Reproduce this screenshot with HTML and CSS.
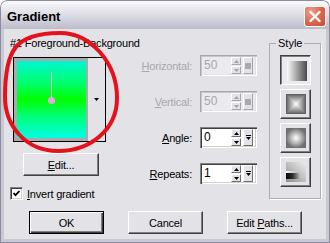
FILE: index.html
```html
<!DOCTYPE html>
<html>
<head>
<meta charset="utf-8">
<title>Gradient</title>
<link rel="stylesheet" href="styles.css">
</head>
<body>
<div class="window">
  <div class="titlebar">
    <span class="title">Gradient</span>
    <div class="close">
      <svg width="22" height="21" viewBox="0 0 22 21"><path d="M6.5 6 L15.5 15 M15.5 6 L6.5 15" stroke="#fff" stroke-width="2.4" stroke-linecap="round"/></svg>
    </div>
  </div>
  <div class="frame">
    <div class="client">
      <div class="main">
        <div class="left">
          <div class="preset">#1 Foreground-Background</div>
          <div class="preview">
            <div class="swatch">
              <div class="grad"><span class="needle"></span><span class="knob"></span></div>
            </div>
            <div class="drop"><svg width="5" height="3" viewBox="0 0 5 3"><polygon points="0,0 5,0 2.5,3" fill="#000"/></svg></div>
          </div>
          <button class="btn edit"><u>E</u>dit...</button>
          <div class="check">
            <span class="box"><svg width="9" height="9" viewBox="0 0 9 9"><polyline points="1.5,4 3.5,6.2 7.5,2" fill="none" stroke="#000" stroke-width="1.8"/></svg></span>
            <span class="check-label"><u>I</u>nvert gradient</span>
          </div>
        </div>

        <div class="fields">
          <span class="lbl off"><u>H</u>orizontal:</span>
          <div class="spin off">
            <span class="val">50</span>
            <span class="arrows"><span class="ab"><svg width="5" height="3" viewBox="0 0 5 3"><polygon points="0,3 5,3 2.5,0"/></svg></span><span class="ab"><svg width="5" height="3" viewBox="0 0 5 3"><polygon points="0,0 5,0 2.5,3"/></svg></span></span>
            <span class="xbtn"><span class="sq"></span></span>
          </div>

          <span class="lbl off"><u>V</u>ertical:</span>
          <div class="spin off">
            <span class="val">50</span>
            <span class="arrows"><span class="ab"><svg width="5" height="3" viewBox="0 0 5 3"><polygon points="0,3 5,3 2.5,0"/></svg></span><span class="ab"><svg width="5" height="3" viewBox="0 0 5 3"><polygon points="0,0 5,0 2.5,3"/></svg></span></span>
            <span class="xbtn"><span class="sq"></span></span>
          </div>

          <span class="lbl"><u>A</u>ngle:</span>
          <div class="spin">
            <span class="val">0</span>
            <span class="arrows"><span class="ab"><svg width="5" height="3" viewBox="0 0 5 3"><polygon points="0,3 5,3 2.5,0"/></svg></span><span class="ab"><svg width="5" height="3" viewBox="0 0 5 3"><polygon points="0,0 5,0 2.5,3"/></svg></span></span>
            <span class="xbtn"><svg width="5" height="6" viewBox="0 0 5 6"><rect x="0" y="0" width="5" height="1"/><polygon points="0,2 5,2 2.5,5"/></svg></span>
          </div>

          <span class="lbl"><u>R</u>epeats:</span>
          <div class="spin">
            <span class="val">1</span>
            <span class="arrows"><span class="ab"><svg width="5" height="3" viewBox="0 0 5 3"><polygon points="0,3 5,3 2.5,0"/></svg></span><span class="ab"><svg width="5" height="3" viewBox="0 0 5 3"><polygon points="0,0 5,0 2.5,3"/></svg></span></span>
            <span class="xbtn"><svg width="5" height="6" viewBox="0 0 5 6"><rect x="0" y="0" width="5" height="1"/><polygon points="0,2 5,2 2.5,5"/></svg></span>
          </div>
        </div>

        <div class="group">
          <div class="legend">Style</div>
          <div class="sbtn pressed"><span class="g g1"></span></div>
          <div class="sbtn"><span class="g g2"></span></div>
          <div class="sbtn"><span class="g g3"></span></div>
          <div class="sbtn"><span class="g g4"></span></div>
        </div>
      </div>

      <div class="buttons">
        <button class="btn default">OK</button>
        <button class="btn">Cancel</button>
        <button class="btn">Edit <u>P</u>aths...</button>
      </div>
    </div>
  </div>
  <svg class="ring" width="330" height="243" viewBox="0 0 330 243">
    <path d="M5 97 C5 50 15 33 60 33 C90 33 117 62 117 98 C117 130 90 151 58 151 C25 151 5 125 5 97 Z" fill="none" stroke="#e5121b" stroke-width="4"/>
  </svg>
</div>
</body>
</html>
```

FILE: styles.css
```css
html, body {
  margin: 0;
  padding: 0;
}

body {
  width: 330px;
  height: 243px;
  overflow: hidden;
  background: #ffffff;
  font-family: "Liberation Sans", Arial, sans-serif;
  font-size: 11px;
  letter-spacing: -0.2px;
  color: #000;
}

.window {
  position: relative;
  width: 330px;
  height: 243px;
  display: flex;
  flex-direction: column;
  border-radius: 7px 7px 0 0;
  overflow: hidden;
}

.titlebar {
  height: 29px;
  box-sizing: border-box;
  display: flex;
  align-items: center;
  padding: 2px 3px 0 6px;
  border: 1px solid #8c8c9c;
  border-bottom: none;
  border-radius: 7px 7px 0 0;
  background: linear-gradient(#fbfbfd 0%, #ececf1 22%, #dcdce4 50%, #c9c9d5 80%, #bcbccb 100%);
}

.title {
  font-weight: bold;
  font-size: 13px;
  letter-spacing: 0;
  color: #000;
}

.close {
  margin-left: auto;
  width: 22px;
  height: 21px;
  box-sizing: border-box;
  border: 1px solid #fff;
  border-radius: 3px;
  background: radial-gradient(ellipse at 30% 25%, #f0a08c 0%, #e06c55 45%, #c8472f 100%);
  display: flex;
  align-items: center;
  justify-content: center;
}

.close svg {
  display: block;
  margin: -1px;
}

.frame {
  flex: 1;
  display: flex;
  border: 1px solid #8c8c9c;
  border-top: none;
  padding: 0 3px 3px;
  background: #c9c9d4;
}

.client {
  flex: 1;
  background: #e3e2e7;
  display: flex;
  flex-direction: column;
}

.main {
  display: flex;
  height: 171px;
}

/* left column */
.left {
  width: 122px;
  box-sizing: border-box;
  padding-left: 6px;
  display: flex;
  flex-direction: column;
  align-items: flex-start;
}

.preset {
  margin-top: 8px;
  line-height: 13px;
  white-space: nowrap;
}

.preview {
  margin: 7px 0 0 3px;
  width: 93px;
  height: 85px;
  box-sizing: border-box;
  border: 1px solid #000;
  display: flex;
}

.swatch {
  width: 74px;
  height: 83px;
  box-sizing: border-box;
  border: 3px solid #a9a9ae;
  border-right-width: 2px;
}

.grad {
  position: relative;
  width: 100%;
  height: 100%;
  background: linear-gradient(#00f5d2 0%, #00ff70 28%, #00ff00 50%, #00ff78 72%, #00ffe4 100%);
}

.needle {
  position: absolute;
  left: 34px;
  top: 11px;
  width: 1px;
  height: 28px;
  background: #dcdcdc;
}

.knob {
  position: absolute;
  left: 31px;
  top: 36px;
  width: 7px;
  height: 7px;
  border-radius: 50%;
  background: #e6a6e6;
}

.drop {
  flex: 1;
  display: flex;
  align-items: center;
  justify-content: center;
}

.drop svg {
  display: block;
}

/* buttons */
.btn {
  width: 75px;
  height: 23px;
  padding: 0;
  margin: 0;
  box-sizing: border-box;
  font-family: "Liberation Sans", Arial, sans-serif;
  font-size: 11px;
  letter-spacing: -0.2px;
  color: #000;
  background: #e3e2e7;
  border: 1px solid;
  border-color: #ffffff #404040 #404040 #ffffff;
  box-shadow: inset -1px -1px #808080;
  border-radius: 0;
}

.btn.default {
  border: 1px solid #000;
  box-shadow: inset 1px 1px #ffffff, inset -1px -1px #404040, inset -2px -2px #808080;
}

.edit {
  margin: 11px 0 0 13px;
  width: 76px;
}

.check {
  margin-top: 11px;
  height: 13px;
  display: flex;
  align-items: center;
}

.box {
  width: 13px;
  height: 13px;
  box-sizing: border-box;
  background: #fff;
  border: 1px solid;
  border-color: #808080 #ffffff #ffffff #808080;
  box-shadow: inset 1px 1px #404040, inset -1px -1px #d4d0c8;
  display: flex;
  align-items: center;
  justify-content: center;
}

.box svg {
  display: block;
}

.check-label {
  margin-left: 4px;
  white-space: nowrap;
}

/* fields */
.fields {
  display: grid;
  grid-template-columns: 66px 57px;
  grid-auto-rows: 21px;
  column-gap: 8px;
  row-gap: 15px;
  align-content: start;
  align-items: center;
  padding-top: 26px;
}

.lbl {
  text-align: right;
  white-space: nowrap;
}

.lbl.off {
  color: #a8a7ad;
}

.spin {
  height: 21px;
  box-sizing: border-box;
  display: flex;
  align-items: center;
  padding: 2px 4px 2px 2px;
  background: #fff;
  box-shadow: inset 1px 1px #808080, inset 2px 2px #404040, inset -1px -1px #ffffff, inset -2px -2px #d4d0c8;
}

.spin.off {
  background: #ebeaee;
  box-shadow: inset 1px 1px #a6a6ac, inset 2px 2px #c6c6cc, inset -1px -1px #ffffff, inset -2px -2px #e3e2e7;
}

.val {
  flex: 1;
  padding-left: 2px;
  font-size: 12px;
  line-height: 15px;
  letter-spacing: 0;
}

.spin.off .val {
  color: #a8a7ad;
}

.arrows {
  width: 10px;
  height: 17px;
  display: flex;
  flex-direction: column;
  gap: 1px;
  margin-right: 2px;
}

.ab {
  flex: 1;
  box-sizing: border-box;
  background: #e3e2e7;
  border: 1px solid;
  border-color: #ffffff #6e6e74 #6e6e74 #ffffff;
  display: flex;
  align-items: center;
  justify-content: center;
}

.ab svg, .xbtn svg {
  display: block;
  fill: #000;
}

.spin.off .ab {
  border-color: #ffffff #a6a6ac #a6a6ac #ffffff;
}

.spin.off .ab svg {
  fill: #a0a0a6;
}

.xbtn {
  width: 10px;
  height: 17px;
  box-sizing: border-box;
  background: #e3e2e7;
  border: 1px solid;
  border-color: #ffffff #6e6e74 #6e6e74 #ffffff;
  display: flex;
  align-items: center;
  justify-content: center;
}

.spin.off .xbtn {
  border-color: #ffffff #a6a6ac #a6a6ac #ffffff;
}

.sq {
  width: 6px;
  height: 6px;
  background: #a9a9ae;
}

/* style group */
.group {
  margin: 14px 0 0 12px;
  width: 52px;
  height: 156px;
  box-sizing: border-box;
  border: 1px solid #aeadb6;
  box-shadow: 1px 1px #ffffff;
  padding: 0 9px 0 10px;
}

.legend {
  margin: -7px 0 0 -4px;
  width: fit-content;
  padding: 0 2px;
  background: #e3e2e7;
  line-height: 13px;
  letter-spacing: 0;
}

.sbtn {
  width: 31px;
  height: 30px;
  box-sizing: border-box;
  margin-top: 4px;
  background: #e3e2e7;
  border: 1px solid;
  border-color: #ffffff #404040 #404040 #ffffff;
  box-shadow: inset -1px -1px #808080;
  display: flex;
  align-items: center;
  justify-content: center;
}

.legend + .sbtn {
  margin-top: 5px;
}

.sbtn.pressed {
  border-color: #404040 #ffffff #ffffff #404040;
  box-shadow: inset 1px 1px #808080;
  background: #ebeaee;
  padding: 2px 0 0 2px;
}

.g {
  display: block;
  width: 20px;
  height: 20px;
}

.g1 {
  background: linear-gradient(to right, #fbfbfb, #4a4a4a);
}

.g2 {
  background:
    linear-gradient(to right, #5a5a5a, #ffffff 50%, #5a5a5a),
    linear-gradient(#5a5a5a, #ffffff 50%, #5a5a5a);
  background-blend-mode: darken;
}

.g3 {
  background: radial-gradient(circle closest-side, #ffffff 0%, #b4b4b4 55%, #707070 100%), #606060;
}

.g4 {
  background:
    linear-gradient(to right, #060606 0%, #2a2a2a 45%, rgba(120,120,120,0) 100%) 0 11px / 14px 6px no-repeat,
    linear-gradient(to right, #ffffff, rgba(230,230,230,0)) 0 9px / 11px 2px no-repeat,
    linear-gradient(to bottom left, #ececec 0%, #c4c4c4 45%, #8c8c8c 100%);
}

/* bottom buttons */
.buttons {
  display: flex;
  gap: 24px;
  padding: 11px 0 0 25px;
}

.ring {
  position: absolute;
  left: 0;
  top: 0;
  pointer-events: none;
}
```
